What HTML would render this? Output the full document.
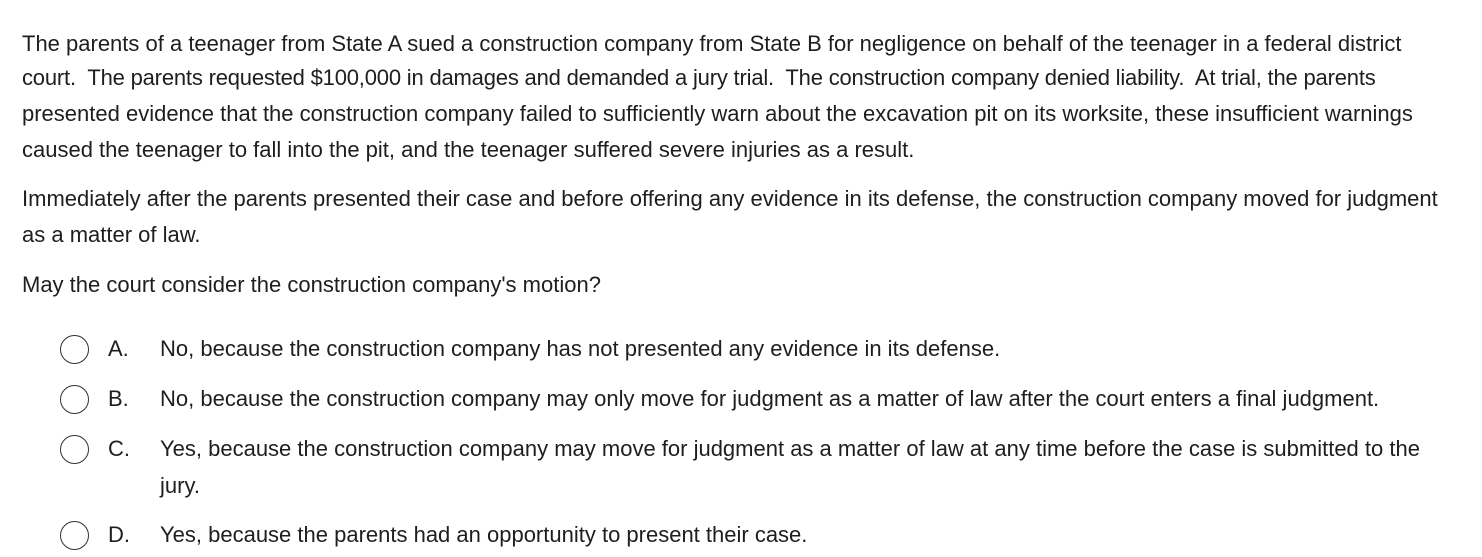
<!DOCTYPE html>
<html><head><meta charset="utf-8"><style>
body{margin:0;width:1482px;height:557px;background:#fff;font-family:"Liberation Sans",Arial,sans-serif;font-size:22px;color:#1e1e1e;position:relative;overflow:hidden}
.l{position:absolute;left:22px;line-height:36px;white-space:nowrap}
.r{position:absolute;left:60px;width:27px;height:27px;border:1.5px solid #333;border-radius:50%}
.k{position:absolute;left:108px;line-height:36px}
.t{position:absolute;left:160px;line-height:36px;white-space:nowrap}
</style></head><body>
<div class="l" style="top:26px">The parents of a teenager from State A sued a construction company from State B for negligence on behalf of the teenager in a federal district</div>
<div class="l" style="top:60px;letter-spacing:-0.19px">court.&nbsp; The parents requested $100,000 in damages and demanded a jury trial.&nbsp; The construction company denied liability.&nbsp; At trial, the parents</div>
<div class="l" style="top:96px">presented evidence that the construction company failed to sufficiently warn about the excavation pit on its worksite, these insufficient warnings</div>
<div class="l" style="top:132px">caused the teenager to fall into the pit, and the teenager suffered severe injuries as a result.</div>
<div class="l" style="top:181px">Immediately after the parents presented their case and before offering any evidence in its defense, the construction company moved for judgment</div>
<div class="l" style="top:217px">as a matter of law.</div>
<div class="l" style="top:267px">May the court consider the construction company's motion?</div>

<div class="r" style="top:335px"></div><div class="k" style="top:331px">A.</div><div class="t" style="top:331px">No, because the construction company has not presented any evidence in its defense.</div>
<div class="r" style="top:385px"></div><div class="k" style="top:381px">B.</div><div class="t" style="top:381px">No, because the construction company may only move for judgment as a matter of law after the court enters a final judgment.</div>
<div class="r" style="top:435px"></div><div class="k" style="top:431px">C.</div><div class="t" style="top:431px">Yes, because the construction company may move for judgment as a matter of law at any time before the case is submitted to the</div>
<div class="t" style="top:468px">jury.</div>
<div class="r" style="top:521px"></div><div class="k" style="top:517px">D.</div><div class="t" style="top:517px">Yes, because the parents had an opportunity to present their case.</div>
</body></html>
